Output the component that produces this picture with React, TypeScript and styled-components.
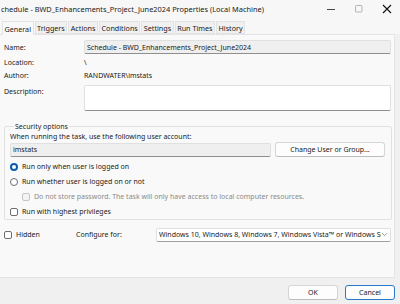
import React from "react";
import styled, { createGlobalStyle } from "styled-components";

const Global = createGlobalStyle`
  html, body { margin: 0; padding: 0; background: #f0f0f0; overflow: hidden; }
  body { font-family: "Noto Sans", "Open Sans", sans-serif; font-size: 7px; color: #1a1a1a; }
  * { box-sizing: border-box; }
`;

const Window = styled.div`
  width: 400px;
  height: 304px;
  display: flex;
  flex-direction: column;
  background: #f0f0f0;
  overflow: hidden;
`;

const TitleBar = styled.div`
  height: 20px;
  display: flex;
  align-items: center;
  background: #f7f7f7;
  padding: 0 3px 3px 1px;
`;

const TitleText = styled.div`
  flex: 1 1 auto;
  min-width: 0;
  white-space: nowrap;
  overflow: hidden;
  font-size: 7.4px;
`;

const Controls = styled.div`
  flex: 0 0 auto;
  display: flex;
  align-items: center;
  gap: 8px;
`;

const Ctrl = styled.div`
  width: 20px;
  height: 12px;
  display: flex;
  justify-content: center;
  align-items: center;
`;

const TabStrip = styled.div`
  height: 14px;
  display: flex;
  align-items: flex-end;
  background: #f7f7f7;
  padding-left: 2px;
  gap: 1px;
`;

const Tab = styled.div<{ $active?: boolean }>`
  height: ${(p) => (p.$active ? 14 : 13)}px;
  padding: 1px 1.5px 0;
  display: flex;
  align-items: center;
  font-size: 7.2px;
  background: ${(p) => (p.$active ? "#f9f9f9" : "#f0f0f0")};
  border: 1px solid #e3e3e3;
  border-bottom: ${(p) => (p.$active ? "none" : "1px solid #e3e3e3")};
  white-space: nowrap;
  position: relative;
  z-index: ${(p) => (p.$active ? 1 : 0)};
  margin-bottom: ${(p) => (p.$active ? -1 : 0)}px;
`;

const Panel = styled.div`
  width: 395px;
  height: 244px;
  background: #f9f9f9;
  border: 1px solid #e3e3e3;
  border-left: none;
  display: flex;
  flex-direction: column;
  padding: 4px 3px 0 4px;
`;

const Row = styled.div<{ $h: number; $mt?: number }>`
  display: flex;
  align-items: center;
  height: ${(p) => p.$h}px;
  margin-top: ${(p) => p.$mt ?? 0}px;
`;

const TopRow = styled(Row)`
  align-items: flex-start;
`;

const Label = styled.div<{ $w?: number }>`
  width: ${(p) => p.$w ?? 80}px;
  flex-shrink: 0;
  white-space: nowrap;
`;

const Field = styled.div<{ $w?: number }>`
  ${(p) => (p.$w ? `width: ${p.$w}px;` : "flex: 1;")}
  height: 14px;
  background: #efefef;
  border: 1px solid #e0e0e0;
  border-bottom: 1px solid #8f8f8f;
  border-radius: 2px;
  display: flex;
  align-items: center;
  padding-left: 2px;
  white-space: nowrap;
  overflow: hidden;
`;

const TextArea = styled.div`
  flex: 1;
  height: 26px;
  background: #ffffff;
  border: 1px solid #e0e0e0;
  border-bottom: 1px solid #8f8f8f;
  border-radius: 2px;
`;

const Group = styled.fieldset`
  margin: 11px 0 0 0;
  padding: 0 6px 0 5px;
  border: 1px solid #e0e0e0;
  border-radius: 2px;
  display: flex;
  flex-direction: column;
`;

const Legend = styled.legend`
  padding: 0 1px;
  margin-left: 4px;
  white-space: nowrap;
`;

const Button = styled.div<{ $w: number; $focus?: boolean }>`
  width: ${(p) => p.$w}px;
  height: 15px;
  background: #fdfdfd;
  border: 1px solid ${(p) => (p.$focus ? "#2a78c8" : "#d6d6d6")};
  border-bottom-color: ${(p) => (p.$focus ? "#2a78c8" : "#bdbdbd")};
  border-radius: 3px;
  display: flex;
  align-items: center;
  justify-content: center;
  white-space: nowrap;
`;

const Option = styled.div<{ $indent?: number; $dim?: boolean; $h?: number; $mt?: number }>`
  display: flex;
  align-items: center;
  gap: 4px;
  height: ${(p) => p.$h ?? 15}px;
  margin-top: ${(p) => p.$mt ?? 0}px;
  padding-left: ${(p) => p.$indent ?? 0}px;
  color: ${(p) => (p.$dim ? "#8a8a8a" : "#1a1a1a")};
  white-space: nowrap;
`;

const Radio = styled.div<{ $on?: boolean }>`
  width: 8px;
  height: 8px;
  border-radius: 50%;
  border: ${(p) => (p.$on ? "2.5px solid #0b5cad" : "1px solid #6e6e6e")};
  background: #fff;
  flex-shrink: 0;
`;

const Check = styled.div<{ $dim?: boolean }>`
  width: 8px;
  height: 8px;
  border-radius: 2px;
  border: 1px solid ${(p) => (p.$dim ? "#c6c6c6" : "#6e6e6e")};
  background: ${(p) => (p.$dim ? "#f3f3f3" : "#fff")};
  flex-shrink: 0;
`;

const Select = styled.div`
  flex: 1;
  height: 14px;
  background: #fff;
  border: 1px solid #e0e0e0;
  border-bottom: 1px solid #a0a0a0;
  border-radius: 2px;
  display: flex;
  align-items: center;
  padding: 0 2px 0 2px;
  overflow: hidden;
`;

const SelectText = styled.div`
  flex: 1;
  white-space: nowrap;
  overflow: hidden;
`;

const Footer = styled.div`
  flex: 1;
  display: flex;
  justify-content: flex-end;
  align-items: center;
  gap: 7px;
  padding: 3px 5px 0 0;
`;

export default function App() {
  return (
    <>
      <Global />
      <Window>
        <TitleBar>
          <TitleText>chedule - BWD_Enhancements_Project_June2024 Properties (Local Machine)</TitleText>
          <Controls>
            <Ctrl>
              <svg width="8" height="8" viewBox="0 0 8 8"><path d="M0 4.5h8" stroke="#333" strokeWidth="0.9" /></svg>
            </Ctrl>
            <Ctrl>
              <svg width="8" height="8" viewBox="0 0 8 8"><rect x="0.5" y="0.5" width="6.5" height="6.5" rx="1" fill="none" stroke="#aaa" strokeWidth="0.9" /></svg>
            </Ctrl>
            <Ctrl>
              <svg width="10" height="10" viewBox="0 0 10 10"><path d="M1 1L9 9M9 1L1 9" stroke="#111" strokeWidth="1.1" /></svg>
            </Ctrl>
          </Controls>
        </TitleBar>
        <TabStrip>
          <Tab $active>General</Tab>
          <Tab>Triggers</Tab>
          <Tab>Actions</Tab>
          <Tab>Conditions</Tab>
          <Tab>Settings</Tab>
          <Tab>Run Times</Tab>
          <Tab>History</Tab>
        </TabStrip>
        <Panel>
          <Row $h={14} $mt={1}>
            <Label>Name:</Label>
            <Field>Schedule - BWD_Enhancements_Project_June2024</Field>
          </Row>
          <Row $h={13} $mt={2}>
            <Label>Location:</Label>
            <div>\</div>
          </Row>
          <Row $h={13}>
            <Label>Author:</Label>
            <div>RANDWATER\imstats</div>
          </Row>
          <TopRow $h={26} $mt={3}>
            <Label style={{ paddingTop: 2 }}>Description:</Label>
            <TextArea />
          </TopRow>
          <Group>
            <Legend>Security options</Legend>
            <Option $h={11}>When running the task, use the following user account:</Option>
            <Row $h={15}>
              <Field $w={261}>imstats</Field>
              <div style={{ width: 4 }} />
              <Button $w={110}>Change User or Group...</Button>
            </Row>
            <Option $mt={2}>
              <Radio $on />
              Run only when user is logged on
            </Option>
            <Option>
              <Radio />
              Run whether user is logged on or not
            </Option>
            <Option $indent={12} $dim>
              <Check $dim />
              Do not store password. The task will only have access to local computer resources.
            </Option>
            <Option>
              <Check />
              Run with highest privileges
            </Option>
          </Group>
          <Row $h={15} $mt={7}>
            <Option style={{ width: 72 }}>
              <Check />
              Hidden
            </Option>
            <Label $w={80}>Configure for:</Label>
            <Select>
              <SelectText>Windows 10, Windows 8, Windows 7, Windows Vista™ or Windows Server 2008</SelectText>
              <svg width="7" height="5" viewBox="0 0 7 5"><path d="M1 1.2l2.5 2.5L6 1.2" fill="none" stroke="#777" strokeWidth="0.8" /></svg>
            </Select>
          </Row>
        </Panel>
        <Footer>
          <Button $w={50}>OK</Button>
          <Button $w={50} $focus>Cancel</Button>
        </Footer>
      </Window>
    </>
  );
}
